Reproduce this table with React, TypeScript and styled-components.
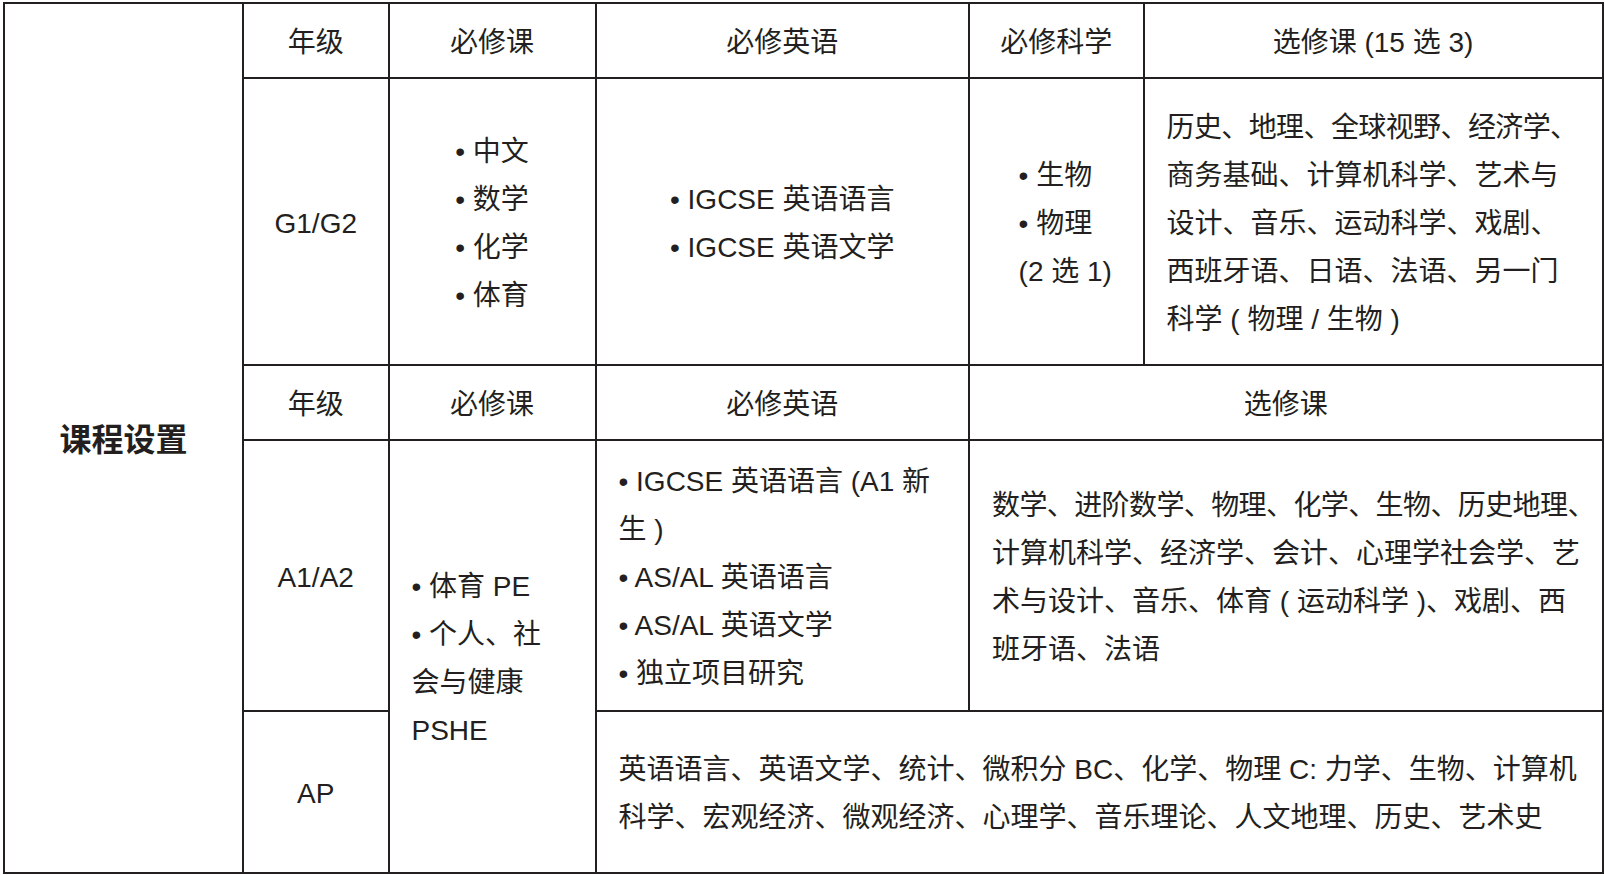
import styled, { createGlobalStyle } from 'styled-components';

const GlobalStyle = createGlobalStyle`
  body {
    margin: 0;
    background: #fff;
  }
`;

const Page = styled.div`
  padding: 2px 0 0 3px;
  overflow: hidden;
`;

const Table = styled.table`
  width: 1600px;
  table-layout: fixed;
  border-collapse: collapse;
  border: 2px solid #231f20;
  font-family: 'Liberation Sans', 'Noto Sans CJK SC', sans-serif;
  font-size: 28px;
  line-height: 48px;
  color: #231f20;
`;

const Row = styled.tr<{ $h: number }>`
  height: ${p => p.$h}px;
`;

const Cell = styled.td<{ $align?: 'center' | 'left' }>`
  border: 2px solid #231f20;
  padding: ${p => (p.$align === 'left' ? '4px 18px 0 22px' : '4px 20px 0')};
  vertical-align: middle;
  text-align: ${p => p.$align ?? 'center'};
`;

const TitleCell = styled(Cell)`
  font-size: 32px;
  font-weight: 700;
`;

const List = styled.ul<{ $shift?: number }>`
  display: inline-block;
  margin: 0 0 0 ${p => p.$shift ?? 0}px;
  padding: 0;
  list-style: none;
  text-align: left;
`;

const Item = styled.li``;

const Line = styled.span<{ $tight?: boolean }>`
  display: block;
  white-space: nowrap;
  letter-spacing: ${p => (p.$tight ? '-0.6px' : 'normal')};
`;

const COLS = [239, 145.5, 207, 373.5, 174.5, 459];

function Bullets({ items, shift }: { items: string[]; shift?: number }) {
  return (
    <List $shift={shift}>
      {items.map(t => (
        <Item key={t}>{t}</Item>
      ))}
    </List>
  );
}

// tight: lines the original squeezed so a trailing 、 still fits
function Lines({ lines, tight = [] }: { lines: string[]; tight?: number[] }) {
  return (
    <>
      {lines.map((t, i) => (
        <Line key={t} $tight={tight.includes(i)}>
          {t}
        </Line>
      ))}
    </>
  );
}

export default function App() {
  return (
    <Page>
      <GlobalStyle />
      <Table>
        <colgroup>
          {COLS.map((w, i) => (
            <col key={i} style={{ width: w }} />
          ))}
        </colgroup>
        <tbody>
          <Row $h={75}>
            <TitleCell rowSpan={5}>课程设置</TitleCell>
            <Cell>年级</Cell>
            <Cell>必修课</Cell>
            <Cell>必修英语</Cell>
            <Cell>必修科学</Cell>
            <Cell>选修课 (15 选 3)</Cell>
          </Row>
          <Row $h={287}>
            <Cell>G1/G2</Cell>
            <Cell>
              <Bullets items={['• 中文', '• 数学', '• 化学', '• 体育']} />
            </Cell>
            <Cell>
              <Bullets items={['• IGCSE 英语语言', '• IGCSE 英语文学']} />
            </Cell>
            <Cell>
              <Bullets items={['• 生物', '• 物理', '(2 选 1)']} shift={18} />
            </Cell>
            <Cell $align="left">
              <Lines
                tight={[0]}
                lines={[
                  '历史、地理、全球视野、经济学、',
                  '商务基础、计算机科学、艺术与',
                  '设计、音乐、运动科学、戏剧、',
                  '西班牙语、日语、法语、另一门',
                  '科学 ( 物理 / 生物 )',
                ]}
              />
            </Cell>
          </Row>
          <Row $h={75}>
            <Cell>年级</Cell>
            <Cell>必修课</Cell>
            <Cell>必修英语</Cell>
            <Cell colSpan={2}>选修课</Cell>
          </Row>
          <Row $h={271}>
            <Cell>A1/A2</Cell>
            <Cell rowSpan={2} $align="left">
              <Lines lines={['• 体育 PE', '• 个人、社', '会与健康', 'PSHE']} />
            </Cell>
            <Cell $align="left">
              <Lines
                lines={['• IGCSE 英语语言 (A1 新', '生 )', '• AS/AL 英语语言', '• AS/AL 英语文学', '• 独立项目研究']}
              />
            </Cell>
            <Cell colSpan={2} $align="left">
              <Lines
                tight={[0]}
                lines={[
                  '数学、进阶数学、物理、化学、生物、历史地理、',
                  '计算机科学、经济学、会计、心理学社会学、艺',
                  '术与设计、音乐、体育 ( 运动科学 )、戏剧、西',
                  '班牙语、法语',
                ]}
              />
            </Cell>
          </Row>
          <Row $h={162}>
            <Cell>AP</Cell>
            <Cell colSpan={3} $align="left">
              <Lines
                lines={[
                  '英语语言、英语文学、统计、微积分 BC、化学、物理 C: 力学、生物、计算机',
                  '科学、宏观经济、微观经济、心理学、音乐理论、人文地理、历史、艺术史',
                ]}
              />
            </Cell>
          </Row>
        </tbody>
      </Table>
    </Page>
  );
}
